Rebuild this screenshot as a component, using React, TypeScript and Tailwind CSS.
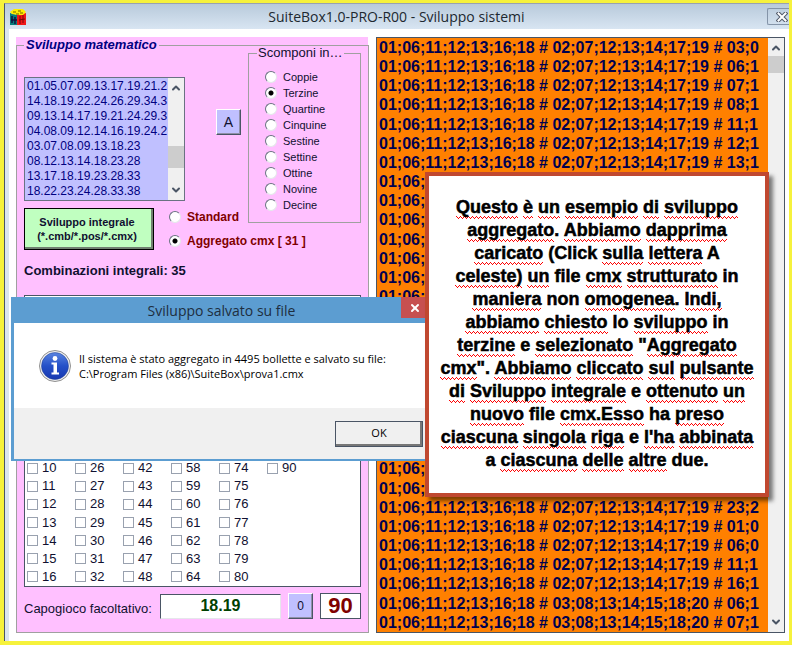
import React, { useState } from 'react';
import { ChevronDown, ChevronUp, X } from 'lucide-react';

const GROUPS = ['Coppie', 'Terzine', 'Quartine', 'Cinquine', 'Sestine', 'Settine', 'Ottine', 'Novine', 'Decine'];

const COMBINATIONS = [
  '01.05.07.09.13.17.19.21.2',
  '14.18.19.22.24.26.29.34.3',
  '09.13.14.17.19.21.24.29.3',
  '04.08.09.12.14.16.19.24.2',
  '03.07.08.09.13.18.23',
  '08.12.13.14.18.23.28',
  '13.17.18.19.23.28.33',
  '18.22.23.24.28.33.38',
];

const BASE = '01;06;11;12;13;16;18';
const SECOND = '02;07;12;13;14;17;19';
const THIRD = '03;08;13;14;15;18;20';

const ROWS = [
  ...['03;0', '06;1', '07;1', '08;1', '11;1', '12;1', '13;1', '14;1', '15;2', '16;1', '17;2', '18;2', '19;2', '20;2', '21;2', '22;2'],
  ...['01;0', '06;1', '11;1', '12;1', '13;1', '16;1', '18;2', '22;2', '23;2', '01;0', '06;0', '11;1', '16;1'],
].map((tail) => `${BASE} # ${SECOND} # ${tail}`).concat(['06;1', '07;1'].map((tail) => `${BASE} # ${THIRD} # ${tail}`));

// "~" marks a word that the spell checker underlines
const NOTE = [
  '~Questo ~è ~un ~esempio ~di ~sviluppo',
  '~aggregato . ~Abbiamo ~dapprima',
  '~caricato (Click ~sulla ~lettera A',
  '~celeste) ~un file ~cmx ~strutturato in',
  '~maniera non ~omogenea . ~Indi,',
  '~abbiamo ~chiesto lo ~sviluppo in',
  '~terzine e ~selezionato "~Aggregato',
  '~cmx ". ~Abbiamo ~cliccato ~sul ~pulsante',
  '~di ~Sviluppo ~integrale e ~ottenuto ~un',
  '~nuovo file ~cmx.Esso ha ~preso',
  "~ciascuna ~singola ~riga e ~l'ha ~abbinata",
  'a ~ciascuna ~delle ~altre due.',
];

const radioClass =
  'h-3 w-3 shrink-0 appearance-none rounded-full border border-t-gray-500 border-l-gray-500 border-r-gray-200 border-b-gray-200 bg-white checked:bg-[radial-gradient(circle,#000_2px,transparent_3px)]';

const raisedClass =
  'border border-t-white border-l-white border-r-gray-600 border-b-gray-600 shadow-[inset_-1px_-1px_0_#9090a8] bg-[#c0c0ff]';

const squiggleClass =
  'pb-0.5 [background:linear-gradient(90deg,#f00_1px,transparent_1px)_0_calc(100%-2px)/4px_1px_repeat-x,linear-gradient(90deg,#f00_1px,transparent_1px)_1px_calc(100%-1px)/2px_1px_repeat-x,linear-gradient(90deg,#f00_1px,transparent_1px)_2px_100%/4px_1px_repeat-x]';

function NoteLine({ text }: { text: string }) {
  return (
    <p>
      {text.split(' ').map((word, i) => {
        const glued = word === '.' || word === '".';
        const mark = word.indexOf('~');
        return (
          <React.Fragment key={i}>
            {i > 0 && !glued && ' '}
            {mark < 0 ? (
              word
            ) : (
              <>
                {word.slice(0, mark)}
                <span className={squiggleClass}>{word.slice(mark + 1)}</span>
              </>
            )}
          </React.Fragment>
        );
      })}
    </p>
  );
}

function AppIcon() {
  return (
    <svg viewBox="0 0 16 16" className="h-4 w-4" aria-hidden="true">
      <path d="M0 4l8 2v10H0z" fill="#087c7c" />
      <path d="M7 6l9-2v12H7z" fill="#f01818" />
      <path d="M0 3l4-3h9l3 3-3 3H8L2 5z" fill="#ffee00" />
      <path d="M2 7v7M5 8v7M1 11h6" stroke="#101040" strokeWidth="1.5" />
      <path d="M10 7v8M13 6v8M9 11l6-1" stroke="#7a0808" />
      <path d="M3 3h3M8 2h3M10 4h3M6 5h3" stroke="#706000" />
    </svg>
  );
}

function OutlinedCross() {
  return (
    <svg viewBox="0 0 12 10" className="h-2.5 w-3" aria-hidden="true">
      <path d="M2.500 1.500l7 7M9.500 1.500l-7 7" stroke="#505868" strokeWidth="4" strokeLinecap="square" />
      <path d="M2.500 1.500l7 7M9.500 1.500l-7 7" stroke="#fff" strokeWidth="2" strokeLinecap="square" />
    </svg>
  );
}

function InfoIcon() {
  return (
    <svg viewBox="0 0 32 32" className="h-8 w-8 shrink-0" aria-hidden="true">
      <defs>
        <linearGradient id="ball" x1="0" y1="0" x2="0" y2="1">
          <stop offset="0" stopColor="#5a84e0" />
          <stop offset="0.5" stopColor="#2450c8" />
          <stop offset="1" stopColor="#1838b0" />
        </linearGradient>
      </defs>
      <circle cx="16" cy="16" r="15.5" fill="#f0f0f0" stroke="#909090" />
      <circle cx="16" cy="16" r="13.5" fill="url(#ball)" stroke="#1c3c90" strokeWidth="0.5" />
      <circle cx="16" cy="8.500" r="2.400" fill="#fff" />
      <path d="M12.500 12.500h5.500v10h2v2h-7.500v-2h2v-8h-2z" fill="#fff" />
    </svg>
  );
}

function Scrollbar({ thumb }: { thumb: string }) {
  return (
    <div className="flex w-4 shrink-0 flex-col items-center bg-[#f0f0f0] py-1 text-gray-600">
      <ChevronUp className="h-3 w-3 shrink-0" strokeWidth={4} />
      <div className="flex w-full flex-1 flex-col pt-0.5">
        <div className={`w-full bg-[#cdcdcd] ${thumb}`} />
      </div>
      <ChevronDown className="h-3 w-3 shrink-0" strokeWidth={4} />
    </div>
  );
}

function SavedDialog({ onClose }: { onClose: () => void }) {
  return (
    <div
      role="dialog"
      aria-labelledby="saved-title"
      className="absolute top-[294px] left-[7px] flex w-[417px] flex-col border-x-[3px] border-b-2 border-[#5c9dd1] bg-white font-['Open_Sans',sans-serif]"
    >
      <div className="relative flex h-[26px] items-center justify-center bg-[#5c9dd1] pt-0.5 pl-1 text-sm text-[#1e2e40]">
        <h2 id="saved-title">Sviluppo salvato su file</h2>
        <button
          onClick={onClose}
          aria-label="Chiudi"
          className="absolute top-0 right-0 flex h-[21px] w-6 items-center justify-center bg-[#c75050] pl-1 text-white"
        >
          <X className="h-3 w-3" strokeWidth={4} />
        </button>
      </div>
      <div className="flex h-[85px] items-center gap-2 pl-[25px] text-[11px] leading-[15px] text-black">
        <InfoIcon />
        <p>
          Il sistema è stato aggregato in 4495 bollette e salvato su file:
          <br />
          C:\Program Files (x86)\SuiteBox\prova1.cmx
        </p>
      </div>
      <div className="flex h-[51px] items-center justify-end bg-[#f0f0f0] pr-0.5">
        <button
          onClick={onClose}
          className="h-[26px] w-[88px] border border-gray-600 bg-[#f0f0f0] text-[11px] text-black shadow-[inset_-2px_-2px_0_#777]"
        >
          OK
        </button>
      </div>
    </div>
  );
}

export default function App() {
  const [group, setGroup] = useState('Terzine');
  const [mode, setMode] = useState('aggregato');
  const [dialogOpen, setDialogOpen] = useState(true);

  return (
    <div className="relative flex min-h-screen flex-col overflow-hidden border-4 border-t-[3px] border-r-[3px] border-[#f6f23c] bg-white font-['Liberation_Sans',Arial,sans-serif] text-[#101030]">
      <header className="flex h-[26px] items-center border-t border-l border-t-gray-400 border-l-gray-600 bg-linear-to-b from-[#b8cadb] to-[#d8e5f2] pl-[5px] text-[#202830]">
        <AppIcon />
        <h1 className="flex-1 text-center font-['Open_Sans',sans-serif] text-sm">SuiteBox1.0-PRO-R00 - Sviluppo sistemi</h1>
        <button
          aria-label="Chiudi finestra"
          className="flex h-[17px] w-[22px] items-center justify-end rounded-l-xs border border-r-0 border-[#8494a8] pr-px"
        >
          <OutlinedCross />
        </button>
      </header>

      <main className="flex flex-1 gap-2 border-l border-l-gray-600 pt-2 pr-1 pb-2 pl-[11px] shadow-[inset_4px_0_0_#dbe5f0]">
        <section className="flex w-[352px] shrink-0 bg-[#ffc0ff]">
          <fieldset className="flex w-full flex-col border border-[#a0a0a0] px-[7px] pb-[13px]">
            <legend className="px-0.5 text-[13px] leading-4 font-bold text-[#000080] italic">Sviluppo matematico</legend>
            <div className="flex h-[152px]">
              <div className="mt-6 flex h-[124px] w-[161px] shrink-0 border border-gray-500 bg-[#c0c0ff]">
                <ul className="flex-1 overflow-hidden pt-px pl-0.5 text-xs leading-[15px] whitespace-nowrap text-[#000080]">
                  {COMBINATIONS.map((row) => (
                    <li key={row}>{row}</li>
                  ))}
                </ul>
                <Scrollbar thumb="mt-[50px] h-[22px]" />
              </div>
              <button className={`mt-14 ml-[31px] h-[26px] w-[25px] shrink-0 text-sm text-[#101030] ${raisedClass}`}>A</button>
              <fieldset className="z-10 -mt-2 ml-[7px] h-[178px] w-[113px] shrink-0 border border-[#a0a0a0] bg-[#ffc0ff] pl-4">
                <legend className="-ml-2 px-px text-[13px] leading-4">Scomponi in…</legend>
                <div className="flex flex-col pt-2">
                  {GROUPS.map((name) => (
                    <label key={name} className="flex h-4 items-center gap-1.5 text-[11px]">
                      <input type="radio" name="group" className={radioClass} checked={group === name} onChange={() => setGroup(name)} />
                      {name}
                    </label>
                  ))}
                </div>
              </fieldset>
            </div>
            <div className="flex items-center">
              <button className="h-[42px] w-[130px] border border-black bg-[#c0ffc0] pr-1 text-[11px] leading-[14px] font-bold text-[#101030] shadow-[inset_-2px_-2px_0_#708070]">
                Sviluppo integrale
                <br />
                (*.cmb/*.pos/*.cmx)
              </button>
              <div className="ml-[15px] flex flex-col text-xs leading-6 font-bold text-[#800000]">
                <label className="flex items-center gap-1.5">
                  <input type="radio" name="mode" className={radioClass} checked={mode === 'standard'} onChange={() => setMode('standard')} />
                  Standard
                </label>
                <label className="flex items-center gap-1.5">
                  <input type="radio" name="mode" className={radioClass} checked={mode === 'aggregato'} onChange={() => setMode('aggregato')} />
                  Aggregato cmx [ 31 ]
                </label>
              </div>
            </div>
            <p className="mt-2.5 text-[13px] leading-4 font-bold">Combinazioni integrali: 35</p>
            <div className="mt-4 grid flex-1 auto-cols-[48px] grid-flow-col grid-rows-[repeat(16,minmax(0,1fr))] border border-gray-600 bg-white pl-0.5">
              {Array.from({ length: 90 }, (_, i) => (
                <label key={i} className="flex items-center gap-1 text-[13px] leading-4">
                  <input type="checkbox" className="h-[11px] w-[11px] appearance-none border border-gray-400 bg-white checked:bg-blue-700" />
                  {String(i + 1).padStart(2, '0')}
                </label>
              ))}
            </div>
            <div className="mt-1.5 flex items-center">
              <label htmlFor="capogioco" className="w-[136px] pt-1.5 text-[13px]">
                Capogioco facoltativo:
              </label>
              <input
                id="capogioco"
                defaultValue="18.19"
                className="h-[25px] w-[121px] border border-t-gray-600 border-l-gray-600 border-r-gray-200 border-b-gray-200 bg-white text-center text-base font-bold text-[#004000]"
              />
              <button className={`ml-[7px] h-[26px] w-[25px] text-xs ${raisedClass}`}>0</button>
              <output className="ml-[7px] h-[26px] flex-1 border border-gray-600 bg-white text-center text-[22px] leading-6 font-bold text-[#800000]">90</output>
            </div>
          </fieldset>
        </section>

        <section className="flex min-w-0 flex-1 border border-gray-600 bg-[#ff8000]">
          <ul className="flex min-w-0 flex-1 flex-col overflow-hidden pl-0.5 text-base leading-[19px] font-bold whitespace-nowrap text-[#000050]">
            {ROWS.map((row, i) => (
              <li key={i} className="flex-1">
                {row}
              </li>
            ))}
          </ul>
          <Scrollbar thumb="h-[17px]" />
        </section>
      </main>

      {dialogOpen && <SavedDialog onClose={() => setDialogOpen(false)} />}

      <aside className="absolute top-[169px] left-[421px] w-[344px] border-4 border-[#c04830] bg-white pt-5 pb-[21px] text-center text-lg leading-[23px] font-bold whitespace-nowrap text-black shadow-[4px_4px_4px_rgba(0,0,0,0.5)] [-webkit-text-stroke:0.5px_black]">
        {NOTE.map((line) => (
          <NoteLine key={line} text={line} />
        ))}
      </aside>
    </div>
  );
}
